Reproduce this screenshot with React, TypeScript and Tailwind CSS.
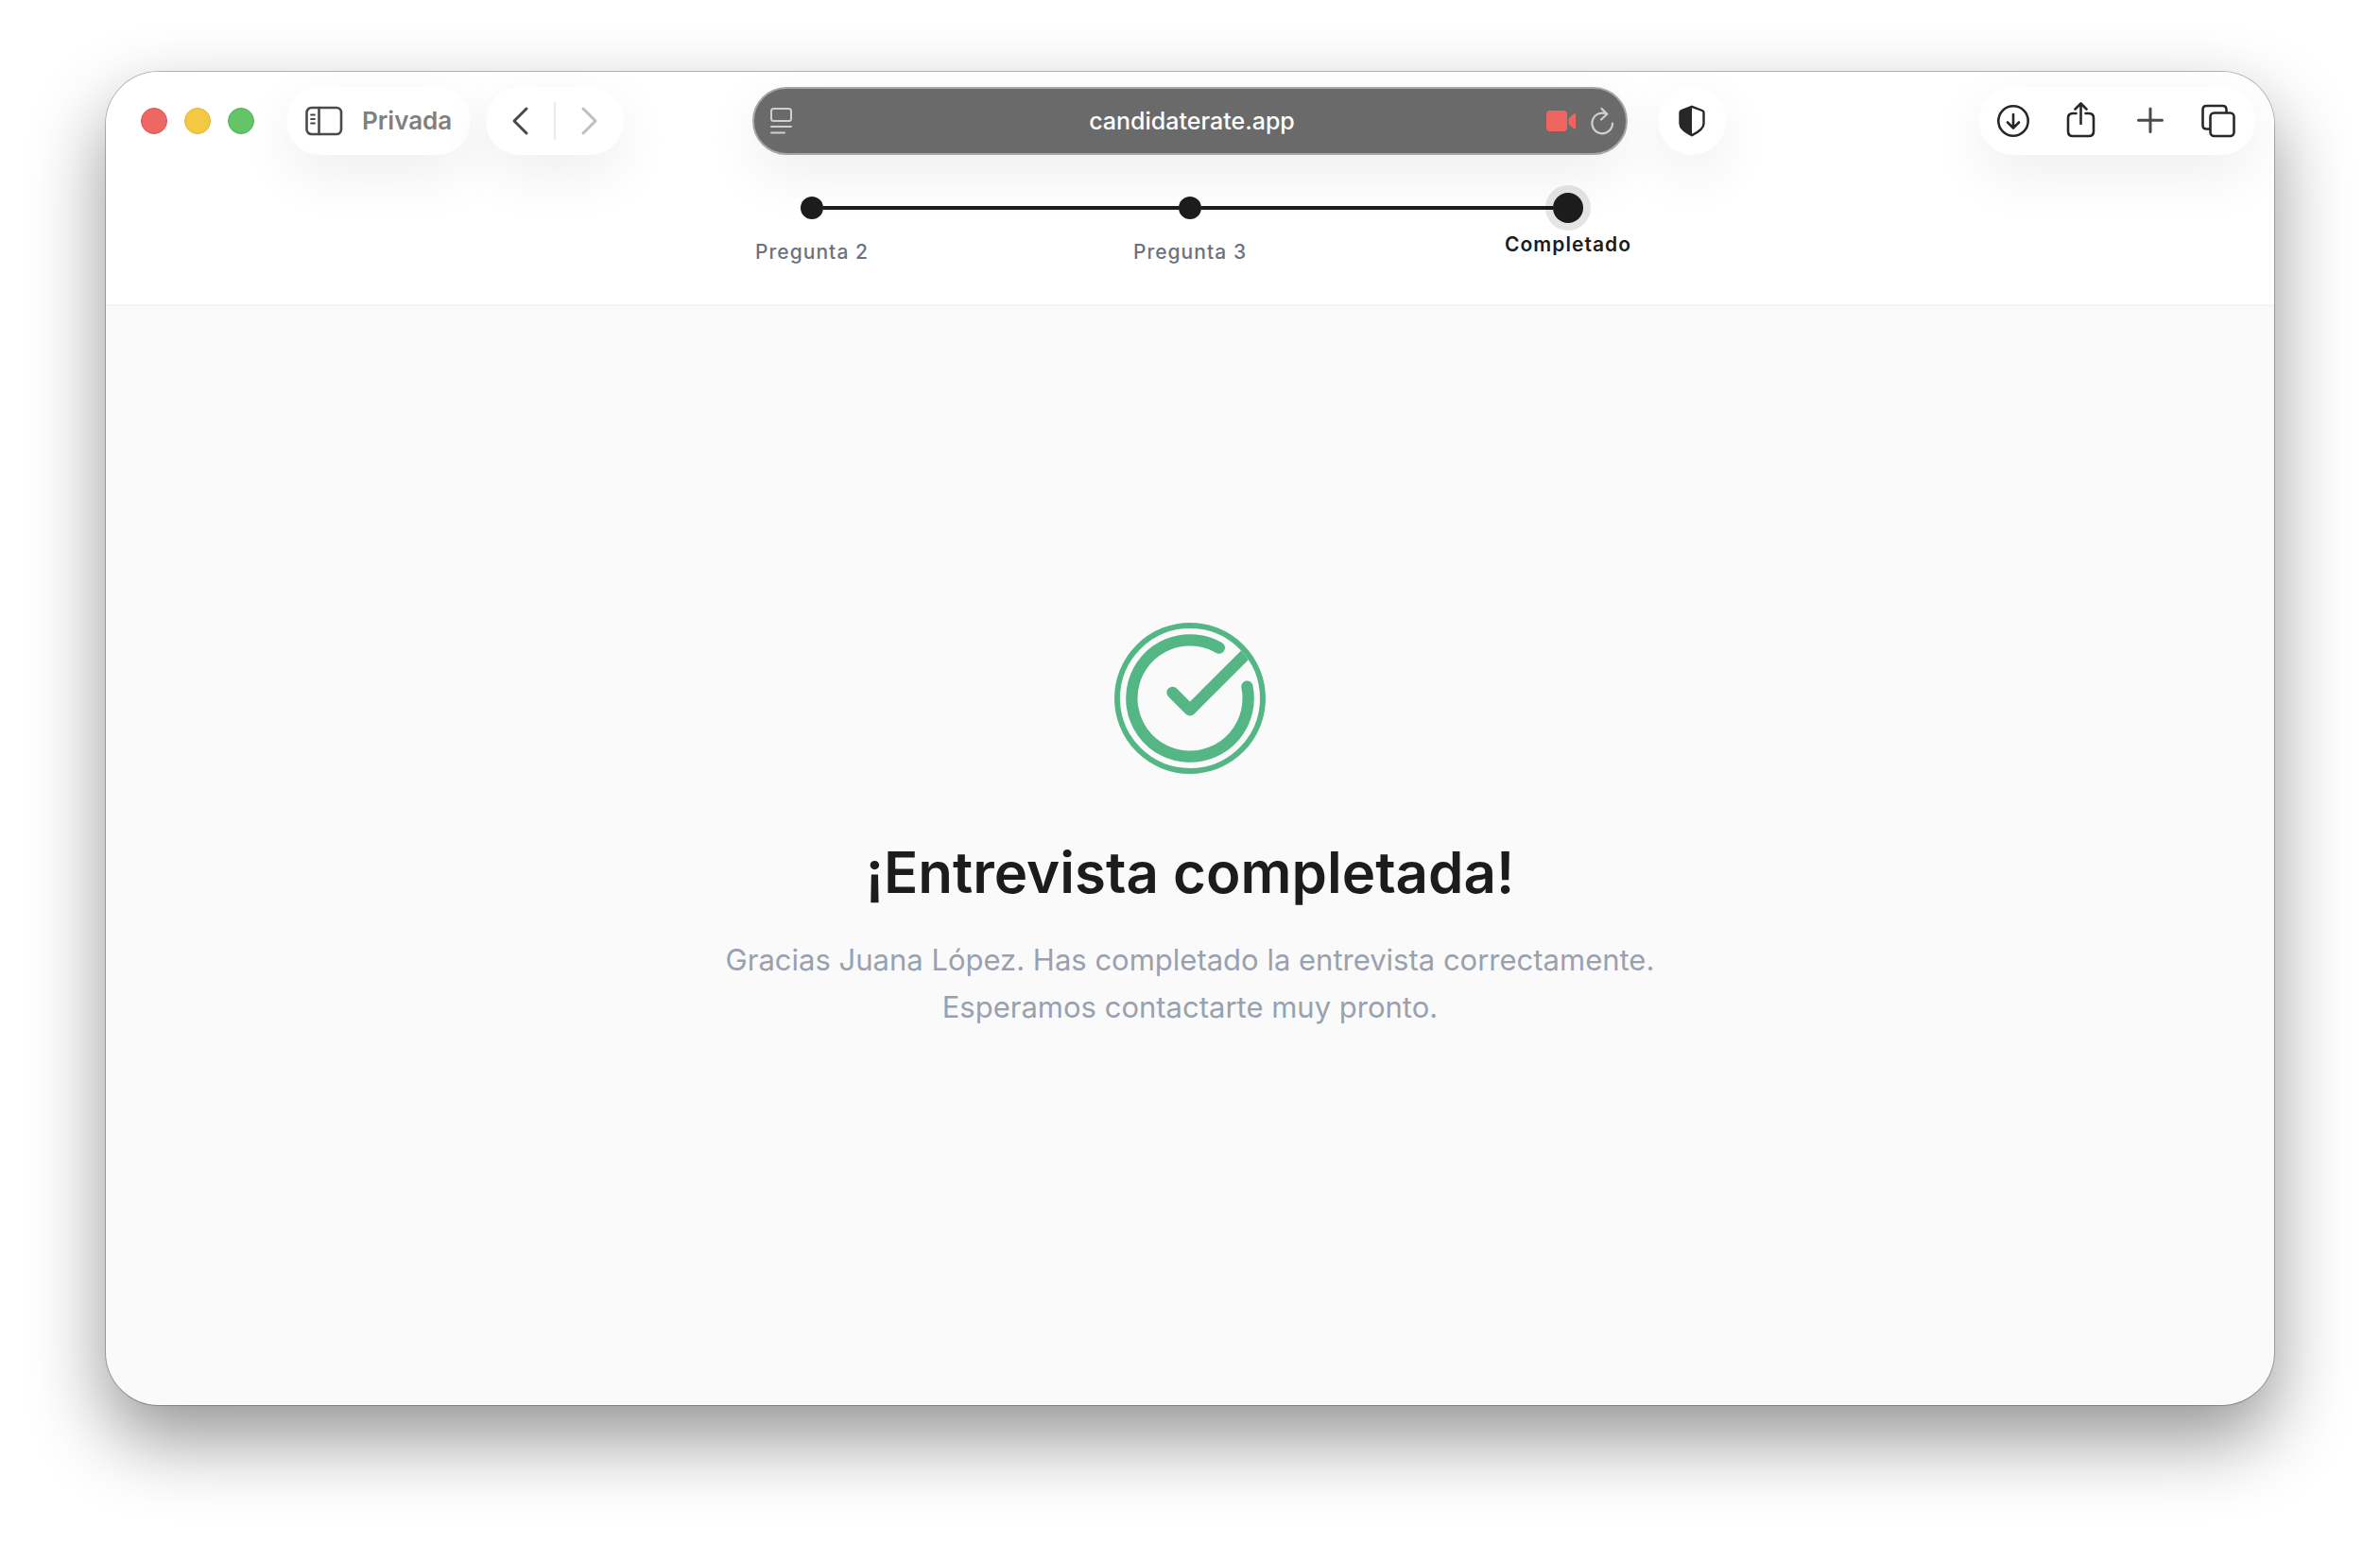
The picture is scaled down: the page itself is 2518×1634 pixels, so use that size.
import React from 'react';
import { CircleCheckBig } from 'lucide-react';

interface Step {
  label: string;
  current?: boolean;
}

const steps: Step[] = [
  { label: 'Pregunta 2' },
  { label: 'Pregunta 3' },
  { label: 'Completado', current: true },
];

const pill = 'flex h-18 items-center rounded-full bg-white shadow-[0_20px_60px_rgba(0,0,0,0.07)]';

const Toolbar: React.FC = () => (
  <div className="grid grid-cols-[1fr_minmax(0,926px)_1fr] items-center pt-4">
    <div className="flex items-center pl-[37px]">
      <div className="mr-[34px] flex gap-[18px]">
        <button aria-label="Cerrar" className="size-7 rounded-full border border-[#e2504f] bg-[#ed6765]" />
        <button aria-label="Minimizar" className="size-7 rounded-full border border-[#e2b32f] bg-[#f3c944]" />
        <button aria-label="Ampliar" className="size-7 rounded-full border border-[#4db24c] bg-[#65c466]" />
      </div>

      <button className={`${pill} mr-4 gap-5 px-5 text-[26px] leading-8 font-semibold text-[#808080]`}>
        <svg width="40" height="32" viewBox="0 0 40 32" fill="none" stroke="#4a4a4a" strokeLinecap="round">
          <rect x="1.5" y="2" width="36.5" height="28" rx="5" strokeWidth="2.6" />
          <path d="M14.5 2v28" strokeWidth="2.6" />
          <path d="M6 9.5h4M6 14h4M6 18.5h4" strokeWidth="1.8" />
        </svg>
        Privada
      </button>

      <div className={pill}>
        <button aria-label="Atrás" className="flex w-18 justify-center">
          <svg width="20" height="32" viewBox="0 0 20 32" fill="none" stroke="#4a4a4a" strokeWidth="3" strokeLinecap="round" strokeLinejoin="round">
            <path d="M17 3L4 16l13 13" />
          </svg>
        </button>
        <div className="h-10 w-0.5 bg-[#ebebeb]" />
        <button aria-label="Adelante" className="flex w-18 justify-center">
          <svg width="20" height="32" viewBox="0 0 20 32" fill="none" stroke="#bfbfbf" strokeWidth="3" strokeLinecap="round" strokeLinejoin="round">
            <path d="M3 3l13 13L3 29" />
          </svg>
        </button>
      </div>
    </div>

    <div className="flex h-18 items-center rounded-full border-2 border-[#a6a6a6] bg-[#6a6a6a] pr-3 pl-4 shadow-[0_20px_60px_rgba(0,0,0,0.07)]">
      <button aria-label="Lector" className="flex w-[72px]">
        <svg width="26" height="30" viewBox="0 0 26 30" fill="none" stroke="#cfcfcf" strokeWidth="2" strokeLinecap="round">
          <rect x="2" y="2" width="21" height="13" rx="2.5" />
          <path d="M2 21h21M2 27.5h14" />
        </svg>
      </button>
      <input
        type="text"
        aria-label="Dirección"
        defaultValue="candidaterate.app"
        className="min-w-0 flex-1 bg-transparent text-center text-[25px] leading-8 font-medium text-white outline-none"
      />
      <div className="flex w-[72px] items-center justify-between">
        <button aria-label="Cámara">
          <svg width="32" height="22" viewBox="0 0 32 22" fill="#ee6560">
            <rect x="0" y="0" width="22" height="22" rx="4" />
            <path d="M23.500 8.200L29.200 3.300Q31 2.200 31 4v14.500q0 1.800-1.800.7L23.500 14.200z" />
          </svg>
        </button>
        <button aria-label="Recargar">
          <svg width="26" height="30" viewBox="0 0 26 30" fill="none" stroke="#cfcfcf" strokeWidth="2.200" strokeLinecap="round" strokeLinejoin="round">
            <path d="M24 17.500A10.800 10.800 0 1 1 18 7.800" />
            <path d="M12.500 2l5.800 5.800-6.300 5.700" />
          </svg>
        </button>
      </div>
    </div>

    <div className="flex items-center justify-between pr-5 pl-8">
      <button aria-label="Privacidad" className={`${pill} w-18 justify-center`}>
        <svg width="30" height="34" viewBox="0 0 30 34">
          <path d="M15 1.800L26 6q1.500.6 1.500 2.200V20c0 5.500-6 9-12.500 12.200C8.500 29 2.500 25.500 2.500 20V8.200Q2.500 6.600 4 6z" fill="none" stroke="#272727" strokeWidth="2.400" strokeLinejoin="round" />
          <path d="M15 1.800V32.200C8.500 29 2.500 25.500 2.500 20V8.200Q2.500 6.600 4 6z" fill="#272727" />
        </svg>
      </button>

      <div className={`${pill} pr-1`}>
        <button aria-label="Descargas" className="flex w-18 justify-center">
          <svg width="36" height="40" viewBox="0 0 36 40" fill="none" stroke="#272727" strokeWidth="2.600" strokeLinecap="round" strokeLinejoin="round">
            <circle cx="18" cy="20" r="15.700" />
            <path d="M18 13v14M12 21.500l6 6 6-6" />
          </svg>
        </button>
        <button aria-label="Compartir" className="flex w-18 justify-center">
          <svg width="36" height="40" viewBox="0 0 36 40" fill="none" stroke="#272727" strokeWidth="2.600" strokeLinecap="round" strokeLinejoin="round">
            <path d="M12.500 12H9q-5 0-5 5v14q0 5 5 5h17q5 0 5-5V17q0-5-5-5h-3.500" />
            <path d="M17.500 23V2M11.500 7.500l6-6 6 6" />
          </svg>
        </button>
        <button aria-label="Nueva pestaña" className="flex w-18 justify-center">
          <svg width="36" height="40" viewBox="0 0 36 40" fill="none" stroke="#4a4a4a" strokeWidth="3" strokeLinecap="round">
            <path d="M19 7v24.500M6.500 19.300h25" />
          </svg>
        </button>
        <button aria-label="Pestañas" className="flex w-18 justify-center">
          <svg width="38" height="40" viewBox="0 0 38 40" fill="none" stroke="#272727" strokeWidth="2.600" strokeLinejoin="round">
            <rect x="11.500" y="11.500" width="25" height="24.500" rx="4" />
            <path d="M28.500 11.500V8q0-4-4-4H7.500q-4 0-4 4v16.500q0 4 4 4h4" />
          </svg>
        </button>
      </div>
    </div>
  </div>
);

const StepDot: React.FC<{ step: Step; first: boolean; last: boolean }> = ({ step, first, last }) => (
  <li className="flex w-[400px] flex-col items-center" aria-current={step.current ? 'step' : undefined}>
    <div className="flex h-8 w-full items-center">
      <div className={`h-1 flex-1 ${first ? 'bg-transparent' : 'bg-[#1c1c1c]'}`} />
      <div
        className={`rounded-full bg-[#1c1c1c] ${step.current ? 'size-8 shadow-[0_0_0_8px_rgba(0,0,0,0.1)]' : 'size-6'}`}
      />
      <div className={`h-1 flex-1 ${last ? 'bg-transparent' : 'bg-[#1c1c1c]'}`} />
    </div>
    <span
      className={`text-[21px] leading-[30px] tracking-wider ${
        step.current ? 'mt-2 font-semibold text-[#1c1c1c]' : 'mt-4 font-medium text-gray-500'
      }`}
    >
      {step.label}
    </span>
  </li>
);

const App: React.FC = () => {
  return (
    <div className="flex min-h-screen bg-white px-28 pt-19 pb-[147px] font-['Inter',sans-serif]">
      <div className="flex flex-1 flex-col overflow-hidden rounded-[56px] bg-[#fafafa] shadow-[0_0_0_1px_rgba(0,0,0,0.25),0_36px_80px_rgba(0,0,0,0.42)]">
        <header className="border-b-2 border-gray-100 bg-white">
          <Toolbar />
          <ol className="flex justify-center pt-10 pb-10">
            {steps.map((step, i) => (
              <StepDot key={step.label} step={step} first={i === 0} last={i === steps.length - 1} />
            ))}
          </ol>
        </header>

        <main className="flex flex-1 flex-col items-center justify-center pb-[62px] text-center">
          <CircleCheckBig className="size-40 rounded-full border-6 border-[#55b685] text-[#55b685]" />
          <h1 className="mt-16 text-[60px] leading-20 font-semibold text-[#1c1c1c]">
            ¡Entrevista completada!
          </h1>
          <p className="mt-7 text-[31px] leading-[50px] text-gray-400">
            Gracias Juana López. Has completado la entrevista correctamente.
            <br />
            Esperamos contactarte muy pronto.
          </p>
        </main>
      </div>
    </div>
  );
};

export default App;
